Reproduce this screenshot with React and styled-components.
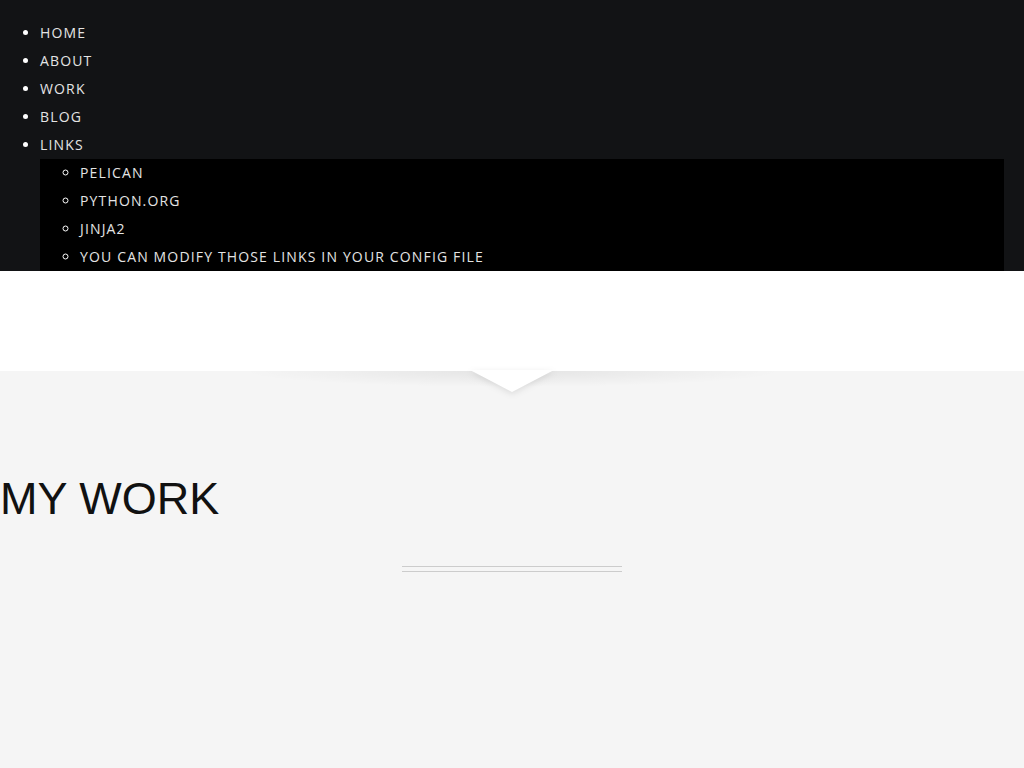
import React from "react";
import styled, { createGlobalStyle } from "styled-components";

const Global = createGlobalStyle`
  html, body { margin: 0; padding: 0; }
  body { background: #f5f5f5; font-family: "Open Sans", sans-serif; }
`;

const Header = styled.header`
  background: #121315;
  padding: 19px 20px 0 0;
`;

const Menu = styled.ul`
  margin: 0;
  padding: 0 0 0 40px;
  list-style: ${(p) => (p.$sub ? "circle" : "disc")};
  background: ${(p) => (p.$sub ? "#000" : "transparent")};
  color: #fff;
`;

const Item = styled.li`
  line-height: 28px;
  font-size: 14px;
`;

const Link = styled.a`
  color: #e4e4e4;
  text-decoration: none;
  text-transform: uppercase;
  letter-spacing: 1.15px;
`;

const Band = styled.div`
  background: #fff;
  height: 100px;
`;

const Work = styled.section`
  position: relative;
  background: #f5f5f5;
  padding-top: 101px;
  height: 296px;
  &::before {
    content: "";
    position: absolute;
    left: 0;
    right: 0;
    top: 0;
    height: 24px;
    background: radial-gradient(ellipse 270px 16px at 50% 0, rgba(0,0,0,0.07), rgba(0,0,0,0));
    pointer-events: none;
  }
`;

const Notch = styled.svg`
  position: absolute;
  left: 50%;
  top: -1px;
  transform: translateX(-50%);
  filter: drop-shadow(0 2px 3px rgba(0,0,0,0.10));
`;

const Title = styled.h2`
  margin: 0;
  font-family: "Liberation Sans", Arial, sans-serif;
  font-weight: 400;
  font-size: 45px;
  line-height: 54px;
  color: #111;
`;

const Rule = styled.div`
  width: 220px;
  height: 4px;
  margin: 40px auto 0;
  border-top: 1px solid #cccccc;
  border-bottom: 1px solid #cccccc;
`;

const main = ["Home", "About", "Work", "Blog"];
const links = ["Pelican", "Python.org", "Jinja2", "You can modify those links in your config file"];

export default function App() {
  return (
    <>
      <Global />
      <Header>
        <nav>
          <Menu>
            {main.map((m) => (
              <Item key={m}>
                <Link href="#">{m}</Link>
              </Item>
            ))}
            <Item>
              <Link href="#">Links</Link>
              <Menu $sub>
                {links.map((l) => (
                  <Item key={l}>
                    <Link href="#">{l}</Link>
                  </Item>
                ))}
              </Menu>
            </Item>
          </Menu>
        </nav>
      </Header>
      <Band />
      <Work>
        <Notch width="84" height="23" viewBox="0 0 84 23">
          <polygon points="0,0 84,0 42,22" fill="#fff" />
        </Notch>
        <Title>MY WORK</Title>
        <Rule />
      </Work>
    </>
  );
}
